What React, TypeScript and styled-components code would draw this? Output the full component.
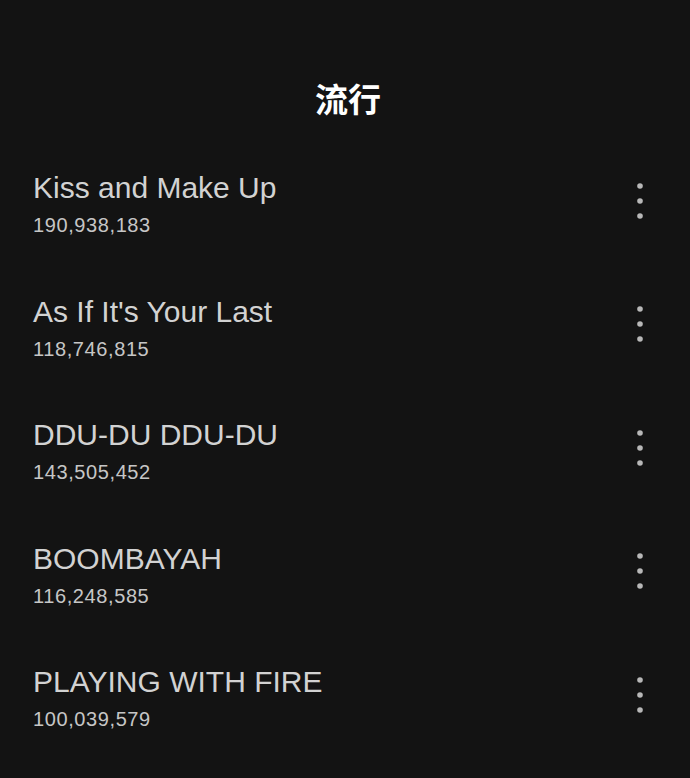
import styled, { createGlobalStyle } from "styled-components";

const GlobalStyle = createGlobalStyle`
    html, body {
        margin: 0;
        padding: 0;
        background-color: #131313;
    }
`;

const tracks = [
    { title: "Kiss and Make Up", plays: "190,938,183" },
    { title: "As If It's Your Last", plays: "118,746,815" },
    { title: "DDU-DU DDU-DU", plays: "143,505,452" },
    { title: "BOOMBAYAH", plays: "116,248,585" },
    { title: "PLAYING WITH FIRE", plays: "100,039,579" },
];

function MoreIcon() {
    return (
        <svg width="12" height="40" viewBox="0 0 12 40">
            <circle cx="6" cy="5" r="2.8" fill="#b8b8b8" />
            <circle cx="6" cy="20" r="2.8" fill="#b8b8b8" />
            <circle cx="6" cy="35" r="2.8" fill="#b8b8b8" />
        </svg>
    );
}

export default function App() {
    return (
        <Page>
            <GlobalStyle />
            <Header>流行</Header>
            <TrackList>
                {tracks.map((t) => (
                    <TrackRow key={t.title}>
                        <TrackInfo>
                            <TrackTitle>{t.title}</TrackTitle>
                            <PlayCount>{t.plays}</PlayCount>
                        </TrackInfo>
                        <MoreButton>
                            <MoreIcon />
                        </MoreButton>
                    </TrackRow>
                ))}
            </TrackList>
        </Page>
    );
}

const Page = styled.div`
    width: 690px;
    height: 778px;
    background-color: #131313;
    font-family: "Liberation Sans", "Noto Sans CJK SC", sans-serif;
    overflow: hidden;
`;

const Header = styled.div`
    height: 142px;
    display: flex;
    align-items: center;
    justify-content: center;
    padding: 54px 0 0 6px;
    box-sizing: border-box;
    color: #ffffff;
    font-size: 33px;
    font-weight: 700;
    font-family: "Noto Sans CJK SC", sans-serif;
`;

const TrackList = styled.div`
    display: flex;
    flex-direction: column;
`;

const TrackRow = styled.div`
    height: 123.5px;
    display: flex;
    align-items: center;
    justify-content: space-between;
    padding: 0 44px 0 33px;
`;

const TrackInfo = styled.div`
    display: flex;
    flex-direction: column;
    gap: 9px;
`;

const TrackTitle = styled.div`
    color: #d2d2d2;
    font-size: 30px;
    line-height: 34px;
`;

const PlayCount = styled.div`
    color: #c6c6c6;
    font-size: 20px;
    line-height: 22px;
    letter-spacing: 0.6px;
`;

const MoreButton = styled.div`
    display: flex;
    align-items: center;
    margin-bottom: 6px;
`;
